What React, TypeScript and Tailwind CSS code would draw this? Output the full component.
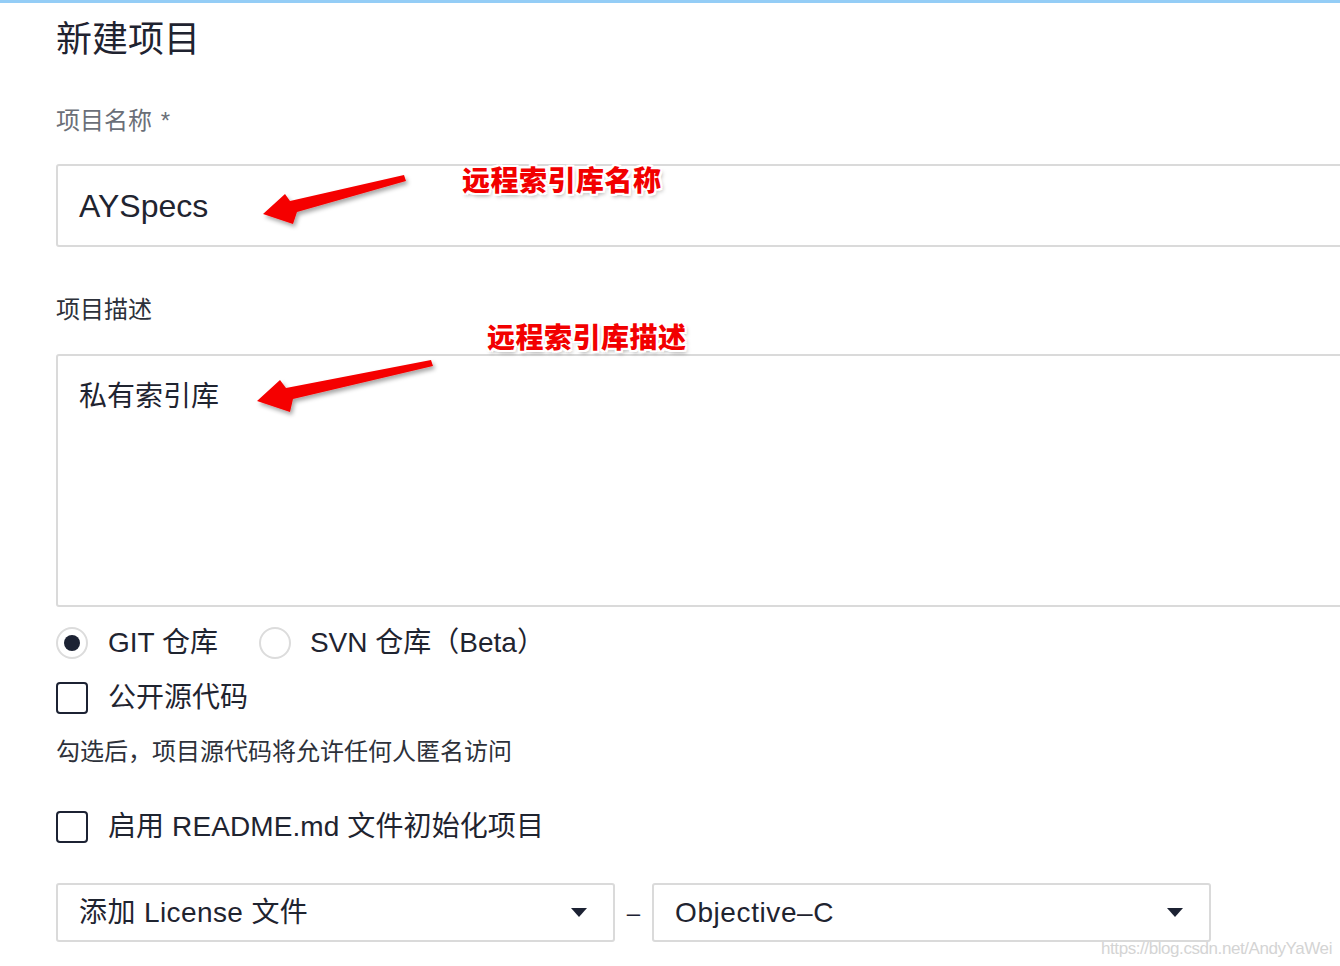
import React from "react";

const font = { fontFamily: '"Liberation Sans", "Noto Sans CJK SC", sans-serif' };

function Caret() {
  return (
    <svg width="16" height="10" viewBox="0 0 16 10" className="shrink-0">
      <path d="M0 0 H16 L8 9 Z" fill="#1c2233" />
    </svg>
  );
}

function Annotation({ text, className }: { text: string; className: string }) {
  return (
    <div
      className={"absolute text-[28px] leading-[34px] font-black text-[#f20000] whitespace-nowrap tracking-[0.5px] " + className}
      style={{
        fontFamily: '"Noto Sans CJK SC", sans-serif',
        textShadow:
          "2px 0 0 #fff, -2px 0 0 #fff, 0 2px 0 #fff, 0 -2px 0 #fff, 2px 2px 0 #fff, -2px -2px 0 #fff, 2px -2px 0 #fff, -2px 2px 0 #fff, 2px 3px 4px rgba(0,0,0,0.35)",
      }}
    >
      {text}
    </div>
  );
}

export default function App() {
  return (
    <div className="relative w-[1340px] h-[966px] overflow-hidden bg-white text-[#1f2430]" style={font}>
      <div className="border-t-[3px] border-[#94cdf6]" />
      <div className="pl-[56px]">
        <h1 className="mt-[11px] h-[44px] leading-[44px] text-[36px] text-[#1f2330]" style={{ fontFamily: '"Noto Sans CJK SC", sans-serif' }}>
          新建项目
        </h1>
        <div className="mt-[48px] leading-[30px] text-[24px] text-[#6b6f78]">项目名称 <span className="ml-[2px]">*</span></div>
        <div className="mt-[28px] w-[1320px] h-[83px] border-2 border-[#dadada] rounded-l-[3px] flex items-center pl-[21px] text-[32px]">
          AYSpecs
        </div>
        <div className="mt-[48px] leading-[30px] text-[24px] text-[#2d313a]">项目描述</div>
        <div className="mt-[29px] w-[1320px] h-[253px] border-2 border-[#dadada] rounded-l-[3px] pl-[21px] pt-[21px] text-[28px] leading-[40px]">
          私有索引库
        </div>
        <div className="mt-[16px] h-[40px] flex items-center text-[28px]">
          <div className="w-[32px] h-[32px] rounded-full border-2 border-[#dcdcdc] flex items-center justify-center">
            <div className="w-[16px] h-[16px] rounded-full bg-[#1c2233]" />
          </div>
          <span className="ml-[20px]">GIT 仓库</span>
          <div className="ml-[41px] w-[32px] h-[32px] rounded-full border-2 border-[#dcdcdc]" />
          <span className="ml-[19px]">SVN 仓库（Beta）</span>
        </div>
        <div className="mt-[15px] h-[40px] flex items-center text-[28px]">
          <div className="w-[32px] h-[32px] rounded-[4px] border-2 border-[#1c2233]" />
          <span className="ml-[20px]">公开源代码</span>
        </div>
        <div className="mt-[19px] leading-[30px] text-[24px] text-[#2d313a]">勾选后，项目源代码将允许任何人匿名访问</div>
        <div className="mt-[40px] h-[40px] flex items-center text-[28px]">
          <div className="w-[32px] h-[32px] rounded-[4px] border-2 border-[#1c2233]" />
          <span className="ml-[20px] tracking-[0.1px]">启用 README.md 文件初始化项目</span>
        </div>
        <div className="mt-[36px] flex items-center">
          <div className="w-[559px] h-[59px] border-2 border-[#dadada] rounded-[3px] flex items-center justify-between pl-[21px] pr-[26px] text-[28px]">
            <span className="tracking-[0.4px]">添加 License 文件</span>
            <Caret />
          </div>
          <span className="w-[37px] text-center text-[24px] text-[#1c2233]">–</span>
          <div className="w-[559px] h-[59px] border-2 border-[#dadada] rounded-[3px] flex items-center justify-between pl-[21px] pr-[26px] text-[28px]">
            <span className="tracking-[0.6px]">Objective–C</span>
            <Caret />
          </div>
        </div>
      </div>

      <svg className="absolute left-0 top-0 pointer-events-none" width="1340" height="966">
        <defs>
          <filter id="sh" x="-20%" y="-50%" width="140%" height="200%">
            <feDropShadow dx="2" dy="3" stdDeviation="2" floodColor="#000" floodOpacity="0.35" />
          </filter>
        </defs>
        <polygon
          points="263,214 285,194 290,201 404,175 406,181 297,212 293,224"
          fill="#f50000"
          filter="url(#sh)"
        />
        <polygon
          points="257,401 280,380 286,388 431,360 433,366 293,399 290,412"
          fill="#f50000"
          filter="url(#sh)"
        />
      </svg>
      <Annotation text="远程索引库名称" className="left-[462px] top-[162px]" />
      <Annotation text="远程索引库描述" className="left-[487px] top-[319px]" />
      <div className="absolute right-[8px] top-[936px] text-[17px] text-[#d4d4d4] tracking-tight" style={{ fontFamily: '"Liberation Sans", sans-serif' }}>
        https://blog.csdn.net/AndyYaWei
      </div>
    </div>
  );
}
